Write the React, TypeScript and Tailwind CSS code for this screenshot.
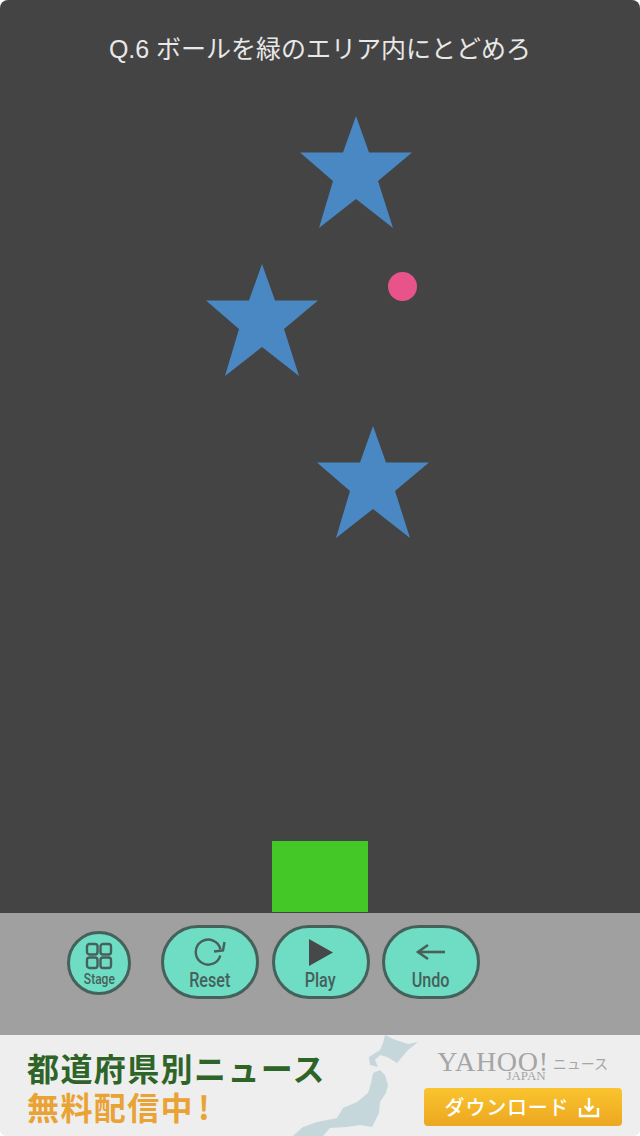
const jp = '"Noto Sans CJK JP", sans-serif';

const stars = [
  { left: 300, top: 116 },
  { left: 206, top: 264 },
  { left: 317, top: 426 },
];

function Star({ left, top }: { left: number; top: number }) {
  return (
    <svg className="absolute" style={{ left, top }} width="113" height="112" viewBox="0 0 113 112">
      <polygon
        fill="#4a88c4"
        points="56,0 69,36.500 112,36.500 78,65 93,112 56,83 19,112 33,65 0,36.500 43,36.500"
      />
    </svg>
  );
}

function GridIcon() {
  return (
    <svg width="28" height="28" viewBox="0 0 28 28" fill="none" stroke="#46605b" strokeWidth="2.4">
      <rect x="2" y="2" width="10.5" height="10.5" rx="2.5" />
      <rect x="15.5" y="2" width="10.5" height="10.5" rx="2.5" />
      <rect x="2" y="15.5" width="10.5" height="10.5" rx="2.5" />
      <rect x="15.5" y="15.5" width="10.5" height="10.5" rx="2.5" />
    </svg>
  );
}

function ResetIcon() {
  return (
    <svg width="32" height="28" viewBox="0 0 32 28" fill="none" stroke="#46605b" strokeWidth="2.4">
      <path d="M26.300 17.500A12.500 12.500 0 1 1 26.500 11.500" />
      <path d="M20 13.500l9-1 1.500-8.500" />
    </svg>
  );
}

function PlayIcon() {
  return (
    <svg width="24" height="27" viewBox="0 0 24 27" fill="#46484a">
      <polygon points="0,0 24,13.500 0,27" />
    </svg>
  );
}

function UndoIcon() {
  return (
    <svg width="32" height="20" viewBox="0 0 32 20" fill="none" stroke="#46605b" strokeWidth="2.6">
      <path d="M3 10h27" />
      <path d="M13 3l-10 7 10 7" />
    </svg>
  );
}

function PillButton({ label, icon }: { label: string; icon: React.ReactNode }) {
  return (
    <button className="w-[98px] h-[74px] rounded-[37px] bg-[#6fdcc4] border-[3px] border-[#46605b] flex flex-col items-center justify-start">
      <div className="h-[32px] mt-[8px] flex items-center justify-center">{icon}</div>
      <span className="mt-[1px] text-[21px] leading-[22px] font-medium text-[#46605b] font-['Roboto',sans-serif] scale-x-[0.77]">
        {label}
      </span>
    </button>
  );
}

function JapanMap() {
  return (
    <svg
      className="absolute left-[285px] top-0"
      width="145"
      height="101"
      viewBox="0 0 145 101"
      fill="#c6d7db"
    >
      <polygon points="100,0 108,4 123,9 133,7 123,15 112,28 102,22 95,20 90,25 93,32 85,30 84,22 95,15 98,8" />
      <polygon points="88,38 95,35 100,40 103,50 101,58 95,67 94,78 87,92 75,90 62,92 45,93 38,101 8,101 18,92 32,87 52,83 58,73 72,67 83,58 86,48" />
    </svg>
  );
}

export default function App() {
  return (
    <div className="w-[640px] h-[1136px] bg-white overflow-hidden flex flex-col">
      <div className="relative h-[913px] bg-[#444444] rounded-t-[8px]">
        <h1
          className="pt-[33px] text-center text-[25px] leading-[32px] font-normal text-[#e8e8e8]"
          style={{ fontFamily: '"Liberation Sans", "Noto Sans CJK JP", sans-serif' }}
        >
          Q.6 ボールを緑のエリア内にとどめろ
        </h1>
        {stars.map((s) => (
          <Star key={s.left} left={s.left} top={s.top} />
        ))}
        <div className="absolute left-[388px] top-[272px] w-[29px] h-[29px] rounded-full bg-[#e8538a]" />
        <div className="absolute left-[272px] top-[841px] w-[96px] h-[71px] bg-[#44c828]" />
      </div>

      <div className="h-[122px] bg-[#a0a0a0] flex items-start pl-[67px] pt-[12px]">
        <button className="mt-[6px] w-[64px] h-[64px] rounded-full bg-[#6fdcc4] border-[3px] border-[#46605b] flex flex-col items-center">
          <div className="mt-[8px] h-[28px]">
            <GridIcon />
          </div>
          <span className="mt-[1px] text-[15px] leading-[17px] font-medium text-[#46605b] font-['Roboto',sans-serif] scale-x-[0.8]">
            Stage
          </span>
        </button>
        <div className="ml-[30px] flex gap-[12.5px]">
          <PillButton label="Reset" icon={<ResetIcon />} />
          <PillButton label="Play" icon={<PlayIcon />} />
          <PillButton label="Undo" icon={<UndoIcon />} />
        </div>
      </div>

      <div className="relative h-[101px] bg-[#eeeeee] flex justify-between rounded-b-[6px]">
        <JapanMap />
        <div className="relative pl-[27px] pt-[13px]" style={{ fontFamily: jp }}>
          <div className="text-[32px] leading-[39px] font-bold tracking-[1.4px] text-[#2f6428]">都道府県別ニュース</div>
          <div className="text-[32px] leading-[39px] font-bold tracking-[1.4px] text-[#e9a234]">
            無料配信中<span className="ml-[4px]">!</span>
          </div>
        </div>
        <div className="relative pr-[18px] flex flex-col items-end">
          <div className="h-[53px] flex items-start pt-[17px] pr-[14px] text-[#a5a5a5]">
            <div className="flex flex-col items-end">
              <span className="text-[28px] leading-[20px] tracking-[0.7px] font-['Liberation_Serif',serif]">YAHOO!</span>
              <span className="pr-[3px] text-[13px] leading-[8px] font-['Liberation_Serif',serif]">JAPAN</span>
            </div>
            <span className="ml-[4px] mt-[3px] text-[14px] leading-[16px]" style={{ fontFamily: jp }}>
              ニュース
            </span>
          </div>
          <button
            className="w-[198px] h-[38px] rounded-[4px] bg-gradient-to-b from-[#fac42e] to-[#eca720] flex items-center justify-center gap-[8px] text-white text-[20px] tracking-[0.8px] font-medium"
            style={{ fontFamily: jp }}
          >
            ダウンロード
            <svg width="24" height="24" viewBox="0 0 24 24" fill="none" stroke="#fff" strokeWidth="2.4">
              <path d="M12 3v12M7.500 11l4.500 4.500 4.500-4.500" />
              <path d="M3 13v8h18v-8" />
            </svg>
          </button>
        </div>
      </div>
    </div>
  );
}
